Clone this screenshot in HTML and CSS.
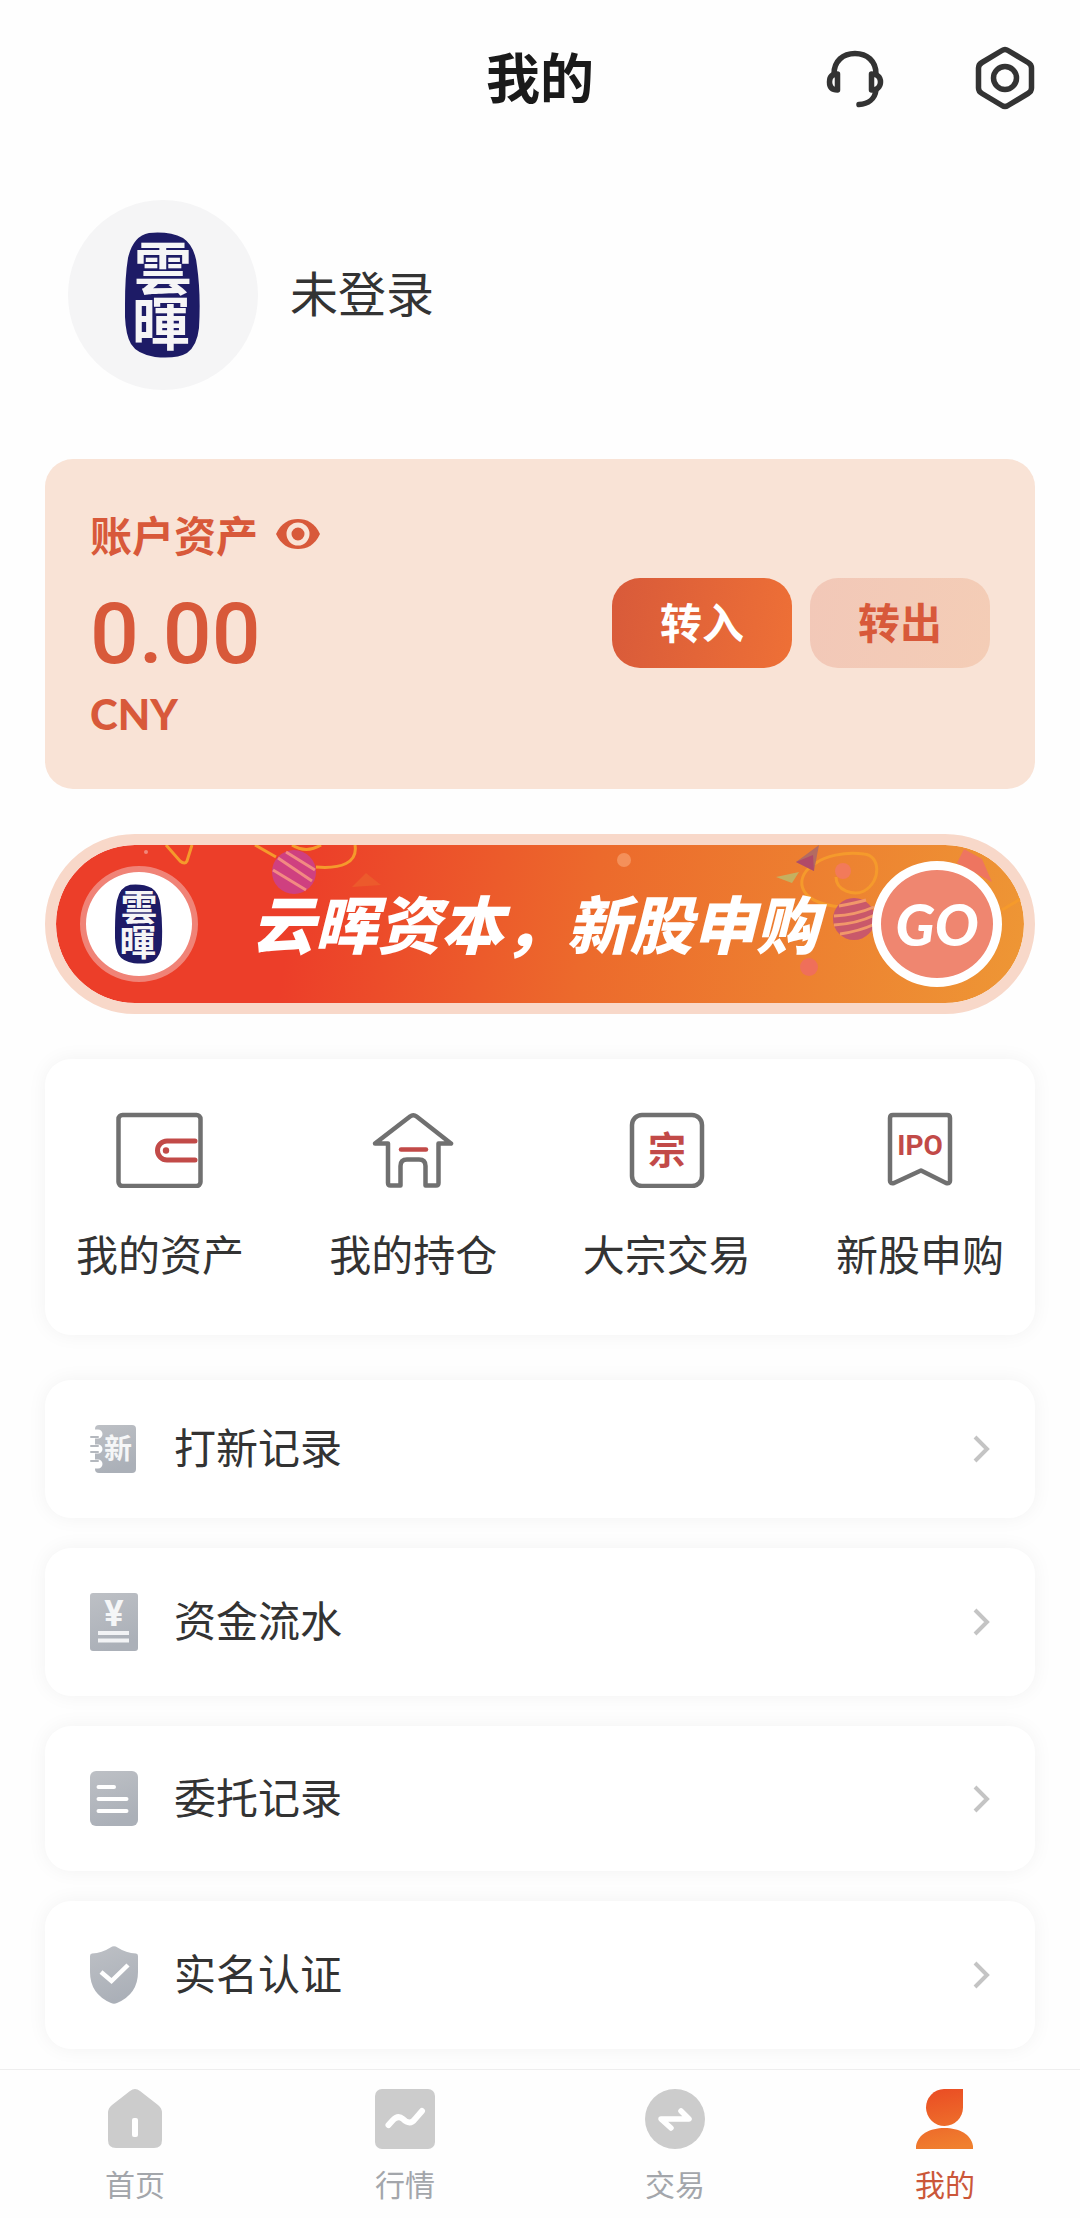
FILE: index.html
```
<!DOCTYPE html>
<html lang="zh-CN">
<head>
    <meta charset="UTF-8">
    <meta name="viewport" content="width=device-width, initial-scale=1.0">
    <title>我的</title>
    <link rel="stylesheet" href="styles.css">
</head>
<body>
    <!-- shared shapes -->
    <svg class="defs" width="0" height="0" aria-hidden="true">
        <defs>
            <linearGradient id="gray" x1="0" y1="0" x2="0.3" y2="1">
                <stop offset="0" stop-color="#bdc0c5"/>
                <stop offset="1" stop-color="#abb0b8"/>
            </linearGradient>
            <linearGradient id="orange" gradientUnits="userSpaceOnUse" x1="24" y1="0" x2="36" y2="60">
                <stop offset="0" stop-color="#ea4e24"/>
                <stop offset="1" stop-color="#f0802f"/>
            </linearGradient>
            <symbol id="seal" viewBox="0 0 76 126">
                <path d="M24 1Q44-1 58 6Q70 14 72 34Q76 62 74 96Q72 114 62 121Q52 127 30 125Q12 122 6 112Q-1 100 0 72Q0 44 3 26Q8 4 24 1Z" fill="#1d1b66"/>
                <text x="38" y="58" class="seal-text">雲</text>
                <text x="36" y="113" class="seal-text">暉</text>
            </symbol>
        </defs>
    </svg>

    <header class="header">
        <h1 class="title">我的</h1>
        <div class="header-actions">
            <button class="icon-btn" aria-label="客服">
                <svg width="60" height="64" viewBox="0 0 60 64" fill="none" stroke="#333" stroke-width="5.500" stroke-linecap="round" stroke-linejoin="round">
                    <path d="M9 28C9 15 18 7.500 30 7.500S51 15 51 28"/>
                    <path d="M12.500 28V44C7 44 4.500 41 4.500 36S7 28 12.500 28Z"/>
                    <path d="M46.500 28V44C52 44 55.500 41 55.500 36S52 28 46.500 28Z"/>
                    <path d="M51 44C50 53 43 58 34 58.500"/>
                </svg>
            </button>
            <button class="icon-btn" aria-label="设置">
                <svg width="60" height="64" viewBox="0 0 60 64" fill="none" stroke="#333" stroke-width="5.500" stroke-linejoin="round">
                    <path d="M27 4.500Q30 2.500 33 4.500L53 16.500Q56.500 18.500 56.500 22V42Q56.500 45.500 53 47.500L33 59.500Q30 61.500 27 59.500L7 47.500Q3.500 45.500 3.500 42V22Q3.500 18.500 7 16.500Z"/>
                    <circle cx="30" cy="32" r="11.500"/>
                </svg>
            </button>
        </div>
    </header>

    <main class="main">
        <div class="profile">
            <div class="avatar"><svg width="76" height="126"><use href="#seal"/></svg></div>
            <span class="name">未登录</span>
        </div>

        <section class="assets">
            <div>
                <div class="assets-title">
                    <span>账户资产</span>
                    <button class="eye" aria-label="显示或隐藏">
                        <svg width="44" height="32" viewBox="0 0 44 32">
                            <path d="M0 16C5 5 13 1 22 1S39 5 44 16C39 27 31 31 22 31S5 27 0 16Z" fill="#d8593a"/>
                            <circle cx="22" cy="16" r="9" fill="#d8593a" stroke="#f9e3d6" stroke-width="5"/>
                        </svg>
                    </button>
                </div>
                <div class="amount">0.00</div>
                <div class="currency">CNY</div>
            </div>
            <div class="assets-actions">
                <button class="btn btn-in">转入</button>
                <button class="btn btn-out">转出</button>
            </div>
        </section>

        <a class="banner" href="#">
            <svg class="banner-decor" viewBox="0 0 968 158" preserveAspectRatio="xMidYMid slice" aria-hidden="true">
                <g fill="none" stroke="#f59a2c" stroke-width="3">
                    <path d="M110 0L124 16Q129 20 131 16L136 0"/>
                    <path d="M199 0L220 12"/>
                    <path d="M236 0Q250 9 265 0"/>
                    <path d="M260 22C285 24 302 18 299 0"/>
                    <path d="M780 32C780 46 798 51 808 46C826 36 824 10 808 9C788 6 768 12 760 18C738 30 738 58 785 62"/>
                    <path d="M946 65L966 53"/>
                </g>
                <circle cx="238" cy="27" r="22" fill="#cf4080"/>
                <path d="M222 13L256 36M230 7L259 25M217 25L250 45" stroke="#f28a82" stroke-width="3"/>
                <circle cx="90" cy="7" r="2" fill="#f0877a"/>
                <path d="M296 42L310 28L325 40Z" fill="#ec5a2c"/>
                <circle cx="568" cy="15" r="7" fill="#f4905a"/>
                <path d="M763 0L740 17L758 26Z" fill="#b36b62"/>
                <path d="M740 17L758 26L757 10Z" fill="#b04a68"/>
                <path d="M720 32L743 27L736 38Z" fill="#c5b060"/>
                <circle cx="787" cy="26" r="8" fill="#f27a5a"/>
                <circle cx="798" cy="74" r="21" fill="#c9586a"/>
                <path d="M783 61Q800 58 810 55M778 71Q800 70 818 62M778 80Q800 79 819 70M784 89Q804 86 819 79" stroke="#f1976a" stroke-width="3" fill="none"/>
                <circle cx="753" cy="122" r="9" fill="#ef6f5a"/>
                <path d="M908 4L926 14L936 37L901 18Z" fill="#ee7560"/>
            </svg>
            <span class="banner-logo"><svg width="48" height="80"><use href="#seal"/></svg></span>
            <span class="banner-text">云晖资本，新股申购</span>
            <span class="banner-go">GO</span>
        </a>

        <nav class="quick card">
            <a class="quick-item" href="#">
                <svg width="88" height="76" viewBox="0 0 88 76" fill="none" stroke="#707070" stroke-width="4.500" stroke-linecap="round">
                    <rect x="2.500" y="3" width="82" height="71" rx="4"/>
                    <path d="M79 29H51a9.500 9.500 0 0 0 0 19H79" stroke="#c24a48" stroke-width="5"/>
                    <circle cx="50" cy="38.500" r="3.200" fill="#c24a48" stroke="none"/>
                </svg>
                <span class="label">我的资产</span>
            </a>
            <a class="quick-item" href="#">
                <svg width="88" height="76" viewBox="0 0 88 76" fill="none" stroke="#707070" stroke-width="4.500" stroke-linejoin="round" stroke-linecap="round">
                    <path d="M41 4.500Q44.300 2 47.600 4.500L82 31.500H69.500V71Q69.500 73.500 67 73.500H56.500V54Q56.500 47.500 50 47.500H38Q31.500 47.500 31.500 54V73.500H21.500Q19 73.500 19 71V31.500H6Z"/>
                    <path d="M32 37.500H57" stroke="#c24a48"/>
                </svg>
                <span class="label">我的持仓</span>
            </a>
            <a class="quick-item" href="#">
                <svg width="88" height="76" viewBox="0 0 88 76">
                    <rect x="9" y="3" width="70" height="71" rx="10" fill="none" stroke="#707070" stroke-width="4.500"/>
                    <text x="44" y="52" class="icon-zong">宗</text>
                </svg>
                <span class="label">大宗交易</span>
            </a>
            <a class="quick-item" href="#">
                <svg width="88" height="76" viewBox="0 0 88 76">
                    <path d="M17 3H71Q74 3 74 6V69Q74 72 70 71L45 58.500L18 71Q14 72 14 69V6Q14 3 17 3Z" fill="none" stroke="#707070" stroke-width="4.500" stroke-linejoin="round"/>
                    <text x="44" y="43" class="icon-ipo">IPO</text>
                </svg>
                <span class="label">新股申购</span>
            </a>
        </nav>

        <a class="row card" href="#">
            <svg width="48" height="48" viewBox="0 0 48 48">
                <rect x="5" y="0" width="41" height="48" rx="4" fill="url(#gray)"/>
                <path d="M0 9H8M0 24H8M0 39H8" stroke="#fff" stroke-width="9" stroke-linecap="round"/>
                <path d="M1 12H8M1 21H8M1 27H8M1 36H8" stroke="#b4b8be" stroke-width="2" stroke-linecap="round"/>
                <text x="28" y="34" class="icon-new">新</text>
            </svg>
            <span class="label">打新记录</span>
            <svg class="arrow" width="18" height="28" viewBox="0 0 18 28"><path d="M3 2L15 14L3 26"/></svg>
        </a>
        <a class="row card" href="#">
            <svg width="48" height="58" viewBox="0 0 48 58">
                <rect width="48" height="58" rx="3" fill="url(#gray)"/>
                <text x="24" y="33" class="icon-yen">¥</text>
                <path d="M8 40H39M8 47.500H39" stroke="#f2f3f5" stroke-width="4"/>
            </svg>
            <span class="label">资金流水</span>
            <svg class="arrow" width="18" height="28" viewBox="0 0 18 28"><path d="M3 2L15 14L3 26"/></svg>
        </a>
        <a class="row card" href="#">
            <svg width="48" height="55" viewBox="0 0 48 55">
                <rect width="48" height="55" rx="6" fill="url(#gray)"/>
                <path d="M8.500 16H24M8.500 28H36.500M8.500 40H36.500" stroke="#fff" stroke-width="4" stroke-linecap="round"/>
            </svg>
            <span class="label">委托记录</span>
            <svg class="arrow" width="18" height="28" viewBox="0 0 18 28"><path d="M3 2L15 14L3 26"/></svg>
        </a>
        <a class="row card" href="#">
            <svg width="48" height="58" viewBox="0 0 48 58">
                <path d="M20.500 1.500Q24-1 27.500 1.500Q36 7 46 7.500Q48 7.500 48 10V26Q48 48 27 57Q24 58.500 21 57Q0 48 0 26V10Q0 7.500 2 7.500Q12 7 20.500 1.500Z" fill="url(#gray)"/>
                <path d="M11 26L21.500 35L38 19" fill="none" stroke="#fff" stroke-width="4.500"/>
            </svg>
            <span class="label">实名认证</span>
            <svg class="arrow" width="18" height="28" viewBox="0 0 18 28"><path d="M3 2L15 14L3 26"/></svg>
        </a>
    </main>

    <nav class="tabbar">
        <a class="tab" href="#">
            <svg width="60" height="60" viewBox="0 0 60 60">
                <path d="M25 2Q30-2 35 2L53 16Q57 19 57 24V51Q57 59 49 59H11Q3 59 3 51V24Q3 19 7 16Z" fill="#ccc"/>
                <rect x="27" y="29" width="6" height="19" rx="2" fill="#fff"/>
            </svg>
            <span>首页</span>
        </a>
        <a class="tab" href="#">
            <svg width="60" height="60" viewBox="0 0 60 60">
                <rect width="60" height="60" rx="7" fill="#ccc"/>
                <path d="M13.500 36L18 31Q23 26 28 30Q35 37 40 30L47 22" fill="none" stroke="#fff" stroke-width="6" stroke-linecap="round"/>
            </svg>
            <span>行情</span>
        </a>
        <a class="tab" href="#">
            <svg width="60" height="60" viewBox="0 0 60 60">
                <circle cx="30" cy="30" r="30" fill="#ccc"/>
                <path d="M36 22L44 30H16L26 39" fill="none" stroke="#fff" stroke-width="5.500" stroke-linecap="round" stroke-linejoin="round"/>
            </svg>
            <span>交易</span>
        </a>
        <a class="tab active" href="#">
            <svg width="60" height="60" viewBox="0 0 60 60" fill="url(#orange)">
                <path d="M29 0H48V18.500A18.500 18.500 0 1 1 29 0Z"/>
                <path d="M1 60V57C3 45 15 39 29.500 39S56 45 58 57V60Z"/>
            </svg>
            <span>我的</span>
        </a>
    </nav>
</body>
</html>
```
FILE: styles.css
```
* {
    box-sizing: border-box;
}
body {
    margin: 0;
    min-height: 100vh;
    display: flex;
    flex-direction: column;
    font-family: "Noto Sans CJK SC", sans-serif;
    font-size: 42px;
    line-height: 48px;
    color: #333;
    background: #fefefe;
}
a {
    color: inherit;
    text-decoration: none;
}
button {
    padding: 0;
    border: none;
    background: none;
    font-family: inherit;
    cursor: pointer;
}
svg {
    display: block;
    flex-shrink: 0;
}
.defs {
    position: absolute;
}

/* Header */
.header {
    display: grid;
    grid-template-columns: 1fr auto 1fr;
    align-items: center;
    padding: 44px 45px;
}
.title {
    grid-column: 2;
    margin: 0;
    padding-bottom: 4px;
    font-size: 54px;
    line-height: 64px;
    color: #1a1a1a;
}
.header-actions {
    display: flex;
    justify-content: flex-end;
    gap: 90px;
}

.main {
    display: flex;
    flex-direction: column;
    padding: 44px 45px 20px;
}

/* Profile */
.profile {
    display: flex;
    align-items: center;
    gap: 32px;
    padding: 0 23px;
    margin-bottom: 69px;
}
.avatar {
    display: flex;
    align-items: center;
    justify-content: center;
    width: 190px;
    height: 190px;
    border-radius: 50%;
    background: #f5f5f6;
}
.seal-text {
    font-size: 58px;
    font-weight: bold;
    text-anchor: middle;
    fill: #f5f5f6;
}
.name {
    padding-bottom: 8px;
    font-size: 48px;
}

/* Assets */
.assets {
    display: flex;
    align-items: center;
    justify-content: space-between;
    padding: 53px 45px 55px;
    margin-bottom: 45px;
    border-radius: 28px;
    background: #f9e3d6;
    color: #d8593a;
}
.assets-title {
    display: flex;
    align-items: center;
    gap: 18px;
    margin-bottom: 18px;
    font-weight: bold;
    line-height: 44px;
}
.amount {
    font-family: Roboto, sans-serif;
    font-size: 86px;
    font-weight: 500;
    line-height: 120px;
}
.currency {
    font-family: Lato, sans-serif;
    font-weight: 900;
    line-height: 40px;
}
.assets-actions {
    display: flex;
    gap: 18px;
}
.btn {
    width: 180px;
    height: 90px;
    padding-bottom: 6px;
    border-radius: 28px;
    font-size: 42px;
    font-weight: bold;
}
.btn-in {
    background: linear-gradient(100deg, #d85a3a, #ee7036);
    color: #fff;
}
.btn-out {
    background: linear-gradient(100deg, #f2c8b8, #f4cdb6);
    color: #d8593a;
}

/* Banner */
.banner {
    position: relative;
    display: flex;
    align-items: center;
    height: 180px;
    padding: 0 22px 0 24px;
    margin-bottom: 45px;
    border: 11px solid #f8d8c9;
    border-radius: 90px;
    background: linear-gradient(100deg, #ec3e29 25%, #ec6a2c 55%, #ee9735) padding-box;
    color: #fff;
    overflow: hidden;
}
.banner-decor {
    position: absolute;
    inset: 0;
    width: 100%;
    height: 100%;
}
.banner-logo,
.banner-text,
.banner-go {
    position: relative;
}
.banner-logo,
.banner-go {
    display: flex;
    align-items: center;
    justify-content: center;
    border-radius: 50%;
}
.banner-logo {
    width: 118px;
    height: 116px;
    border: 6px solid #f08377;
    background: #fff;
}
.banner-text {
    flex: 1;
    padding-bottom: 4px;
    font-size: 63px;
    font-weight: 900;
    font-style: italic;
    line-height: 72px;
    text-align: center;
    white-space: nowrap;
}
.banner-go {
    width: 130px;
    height: 126px;
    border: 9px solid #fff;
    background: #ef8670;
    font-family: Lato, sans-serif;
    font-size: 58px;
    font-weight: 900;
    font-style: italic;
}

/* Cards */
.card {
    border-radius: 26px;
    background: #fff;
    box-shadow: 0 0 20px rgba(0, 0, 0, 0.05);
}
.label {
    padding-bottom: 6px;
    line-height: 42px;
}
.quick {
    display: flex;
    justify-content: space-between;
    padding: 53px 31px 55px;
    margin-bottom: 45px;
}
.quick-item {
    display: flex;
    flex-direction: column;
    align-items: center;
    gap: 44px;
}
.icon-zong,
.icon-ipo {
    text-anchor: middle;
    fill: #c24a48;
}
.icon-zong {
    font-size: 38px;
    font-weight: bold;
}
.icon-ipo {
    font-family: Roboto, sans-serif;
    font-size: 28px;
    font-weight: bold;
}
.row {
    display: flex;
    align-items: center;
    gap: 36px;
    padding: 45px;
}
.row + .row {
    margin-top: 30px;
}
.row .label {
    flex: 1;
}
.arrow {
    fill: none;
    stroke: #c4c4c4;
    stroke-width: 4;
}
.icon-new,
.icon-yen {
    text-anchor: middle;
    fill: #f5f6f7;
}
.icon-new {
    font-size: 28px;
    font-weight: bold;
}
.icon-yen {
    font-family: Roboto, sans-serif;
    font-size: 36px;
    font-weight: bold;
}

/* Bottom tabs */
.tabbar {
    position: sticky;
    bottom: 0;
    display: flex;
    margin-top: auto;
    padding: 19px 0 14px;
    border-top: 1px solid #eee;
    background: #fefefe;
}
.tab {
    flex: 1;
    display: flex;
    flex-direction: column;
    align-items: center;
    gap: 13px;
    font-size: 30px;
    line-height: 42px;
    color: #a3a6ab;
}
.tab.active {
    color: #cb5739;
}
```
